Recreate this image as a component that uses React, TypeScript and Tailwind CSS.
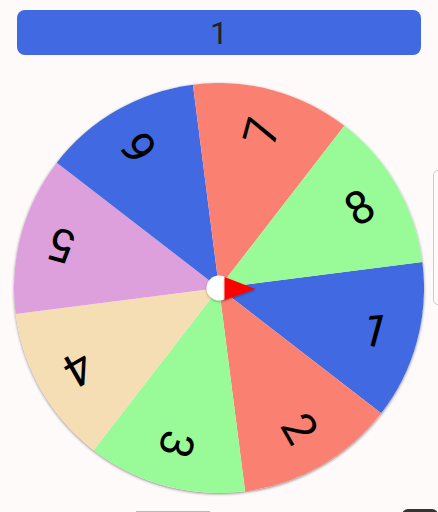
const SEGMENTS = [
  { label: "1", color: "#4169E1" },
  { label: "2", color: "#FA8072" },
  { label: "3", color: "#98FB98" },
  { label: "4", color: "#F5DEB3" },
  { label: "5", color: "#DDA0DD" },
  { label: "6", color: "#4169E1" },
  { label: "7", color: "#FA8072" },
  { label: "8", color: "#98FB98" },
];

const R = 205;
const C = 205;
const OFFSET = 82.7; // start angle of segment 1, clockwise from top

const pt = (deg: number, r: number) => {
  const a = (deg * Math.PI) / 180;
  return [C + r * Math.sin(a), C - r * Math.cos(a)];
};

const Wheel = () => {
  const step = 360 / SEGMENTS.length;
  return (
    <svg width="410" height="410" viewBox="0 0 410 410" className="block">
      {SEGMENTS.map((s, i) => {
        const a0 = OFFSET + i * step;
        const a1 = a0 + step;
        const [x0, y0] = pt(a0, R);
        const [x1, y1] = pt(a1, R);
        return (
          <path
            key={"p" + i}
            d={`M${C},${C} L${x0},${y0} A${R},${R} 0 0 1 ${x1},${y1} Z`}
            fill={s.color}
          />
        );
      })}
      {SEGMENTS.map((s, i) => {
        const mid = OFFSET + i * step + step / 2;
        const [x, y] = pt(mid, 162);
        return (
          <text
            key={"t" + i}
            x={x}
            y={y}
            textAnchor="middle"
            dominantBaseline="central"
            fontSize="46"
            fill="#000"
            style={{ fontFamily: "Roboto, sans-serif" }}
            transform={`rotate(${mid - 90} ${x} ${y})`}
          >
            {s.label}
          </text>
        );
      })}
      <defs>
        <filter id="sh" x="-50%" y="-50%" width="200%" height="200%">
          <feDropShadow dx="0" dy="1" stdDeviation="1.2" floodColor="#000" floodOpacity="0.35" />
        </filter>
      </defs>
      <circle cx={C} cy={C} r="12.5" fill="#fff" filter="url(#sh)" />
      <polygon points={`${C + 5.5},${C - 11} ${C + 5.5},${C + 12} ${C + 36.5},${C + 1}`} fill="#FF0000" filter="url(#sh)" />
    </svg>
  );
};

const App = () => {
  return (
    <div className="w-[438px] h-[512px] overflow-hidden bg-[#FFFAFA] flex flex-col" style={{ fontFamily: "Roboto, sans-serif" }}>
      <div className="mx-[17px] mt-[10px] h-[45px] shrink-0 rounded-[8px] bg-[#4169E1] flex items-center justify-center">
        <span className="text-[32px] leading-none text-[#222]">1</span>
      </div>
      <div className="flex mt-[28px] shrink-0">
        <div className="ml-[14px] shrink-0 rounded-full shadow-[0_1px_3px_rgba(0,0,0,0.45)]">
          <Wheel />
        </div>
        <div className="ml-[9px] mt-[87px] w-[60px] h-[135px] shrink-0 rounded-[5px] border border-[#ccc] bg-[#FFFAFA]" />
      </div>
      <div className="flex mt-[16px] items-start shrink-0">
        <div className="ml-[136px] mt-[2px] w-[74px] h-[6px] bg-[#b9cde3] border border-[#a8bcd2]" />
        <div className="ml-auto w-[36px] h-[6px] rounded-t-[6px] bg-[#333]" />
      </div>
    </div>
  );
};

export default App;
